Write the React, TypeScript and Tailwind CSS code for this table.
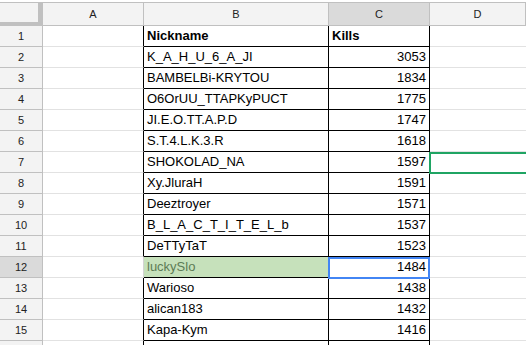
import React from "react";

const rows: [string, string][] = [
  ["Nickname", "Kills"],
  ["K_A_H_U_6_A_JI", "3053"],
  ["BAMBELBi-KRYTOU", "1834"],
  ["O6OrUU_TTAPKyPUCT", "1775"],
  ["JI.E.O.TT.A.P.D", "1747"],
  ["S.T.4.L.K.3.R", "1618"],
  ["SHOKOLAD_NA", "1597"],
  ["Xy.JluraH", "1591"],
  ["Deeztroyer", "1571"],
  ["B_L_A_C_T_I_T_E_L_b", "1537"],
  ["DeTTyTaT", "1523"],
  ["luckySlo", "1484"],
  ["Warioso", "1438"],
  ["alican183", "1432"],
  ["Kapa-Kym", "1416"],
  ["", ""],
];

export default function App() {
  return (
    <div
      className="relative w-[526px] h-[345px] overflow-hidden bg-white text-black"
      style={{ fontFamily: '"Liberation Sans", Arial, sans-serif' }}
    >
      {/* header row */}
      <div className="h-[2px] bg-white" />
      <div className="flex h-[24px] border-t border-[#c0c0c0]">
        <div className="w-[43px] shrink-0 flex">
          <div className="flex-1 flex flex-col">
            <div className="flex-1 bg-[#f3f3f3]" />
            <div className="h-[4px] bg-[#c0c0c0]" />
          </div>
          <div className="w-[4px] bg-[#c0c0c0]" />
          <div className="w-[1px] bg-[#c0c0c0]" />
        </div>
        {[
          ["A", "w-[101px] bg-[#f3f3f3]"],
          ["B", "w-[185px] bg-[#f3f3f3]"],
          ["C", "w-[101px] bg-[#dadada]"],
          ["D", "flex-1 bg-[#f3f3f3]"],
        ].map(([l, c]) => (
          <div
            key={l}
            className={`${c} shrink-0 flex items-center justify-center border-r border-b border-[#c0c0c0] text-[11px] text-[#222]`}
          >
            {l}
          </div>
        ))}
      </div>

      {rows.map(([name, kills], i) => {
        const n = i + 1;
        const sel = n === 12;
        const bold = n === 1;
        const last = n === 16;
        return (
          <div key={n} className="flex h-[21px]">
            <div
              className={`w-[43px] shrink-0 flex items-center justify-center border-r border-b border-[#c0c0c0] text-[11px] text-[#222] ${
                sel ? "bg-[#dadada]" : "bg-[#f3f3f3]"
              }`}
            >
              {last ? "" : n}
            </div>
            <div
              className={`w-[101px] shrink-0 border-b border-[#e2e2e2] border-r ${
                sel ? "border-r-[#d4d4d4]" : "border-r-black"
              }`}
            />
            <div
              className={`w-[185px] shrink-0 border-b border-b-black border-r border-r-black pl-[3px] text-[13px] leading-[20px] whitespace-nowrap overflow-hidden ${
                bold ? "font-bold" : ""
              } ${sel ? "bg-[#c6e1bb] text-[#5d7c55]" : ""}`}
            >
              {name}
            </div>
            <div
              className={`w-[101px] shrink-0 border-b border-b-black border-r border-r-black px-[3px] text-[13px] leading-[20px] whitespace-nowrap ${
                bold ? "font-bold text-left" : "text-right"
              }`}
            >
              {kills}
            </div>
            <div className="flex-1 border-b border-[#e2e2e2]" />
          </div>
        );
      })}

      {/* selection overlays */}
      <div className="absolute left-[328px] top-[257px] w-[102px] h-[22px] border-2 border-[#4285f4] pointer-events-none" />
      <div className="absolute left-[429px] top-[152px] w-[110px] h-[22px] border-2 border-[#1fa463] pointer-events-none" />
    </div>
  );
}
